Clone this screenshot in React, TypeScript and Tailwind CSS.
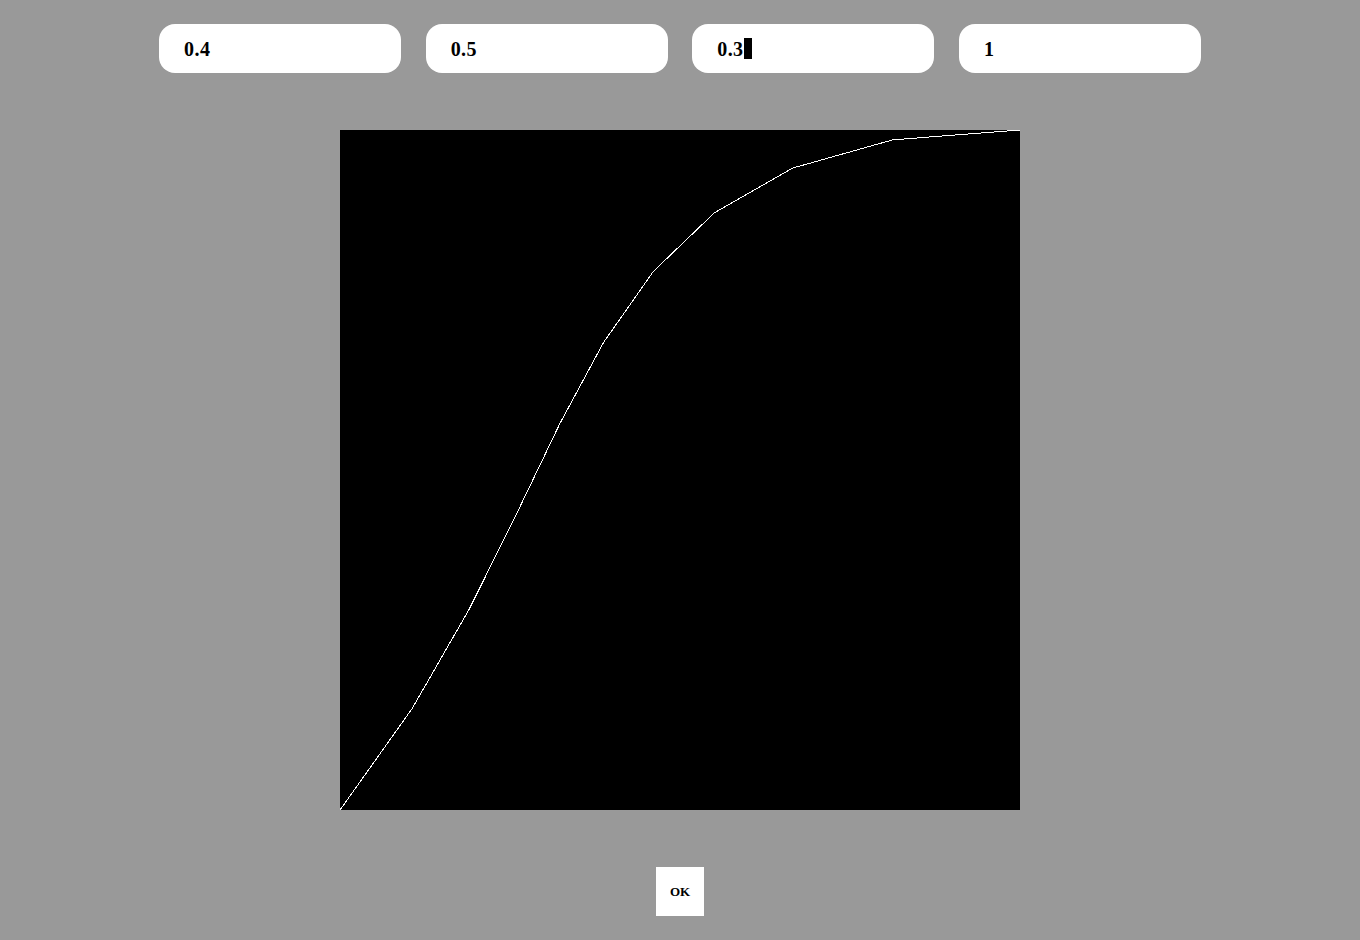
import { useState } from "react";

const bezierPoints = (x1: number, y1: number, x2: number, y2: number, steps: number) => {
  const pts: string[] = [];
  for (let i = 0; i <= steps; i++) {
    const t = i / steps;
    const a = 3 * (1 - t) * (1 - t) * t;
    const b = 3 * (1 - t) * t * t;
    const c = t * t * t;
    const x = a * x1 + b * x2 + c;
    const y = a * y1 + b * y2 + c;
    pts.push(`${(x * 680).toFixed(2)},${(680 - y * 680).toFixed(2)}`);
  }
  return pts.join(" ");
};

export default function App() {
  const [values] = useState(["0.4", "0.5", "0.3", "1"]);
  const focused = 2;
  const [x1, y1, x2, y2] = values.map(Number);

  return (
    <div className="min-h-screen w-full bg-[#999999] font-['Liberation_Serif',serif] font-bold text-black">
      <div className="flex justify-center gap-[24.6px] pt-[24px]">
        {values.map((v, i) => (
          <div
            key={i}
            className="flex h-[49px] w-[242px] items-center rounded-2xl bg-white pl-[25px] text-[20px] tracking-[0.4px]"
          >
            <span>{v}</span>
            {i === focused && <span className="inline-block h-[21px] w-[8px] bg-black" />}
          </div>
        ))}
      </div>

      <div className="mt-[57px] flex justify-center">
        <svg width={680} height={680} className="block bg-black">
          <polyline
            points={bezierPoints(x1, y1, x2, y2, 10)}
            fill="none"
            stroke="#ffffff"
            strokeWidth={1}
            shapeRendering="crispEdges"
          />
        </svg>
      </div>

      <div className="mt-[57px] flex justify-center pb-[24px]">
        <button
          type="button"
          className="flex h-[49px] w-[48px] items-center justify-center bg-white text-[13px] font-bold"
        >
          OK
        </button>
      </div>
    </div>
  );
}
